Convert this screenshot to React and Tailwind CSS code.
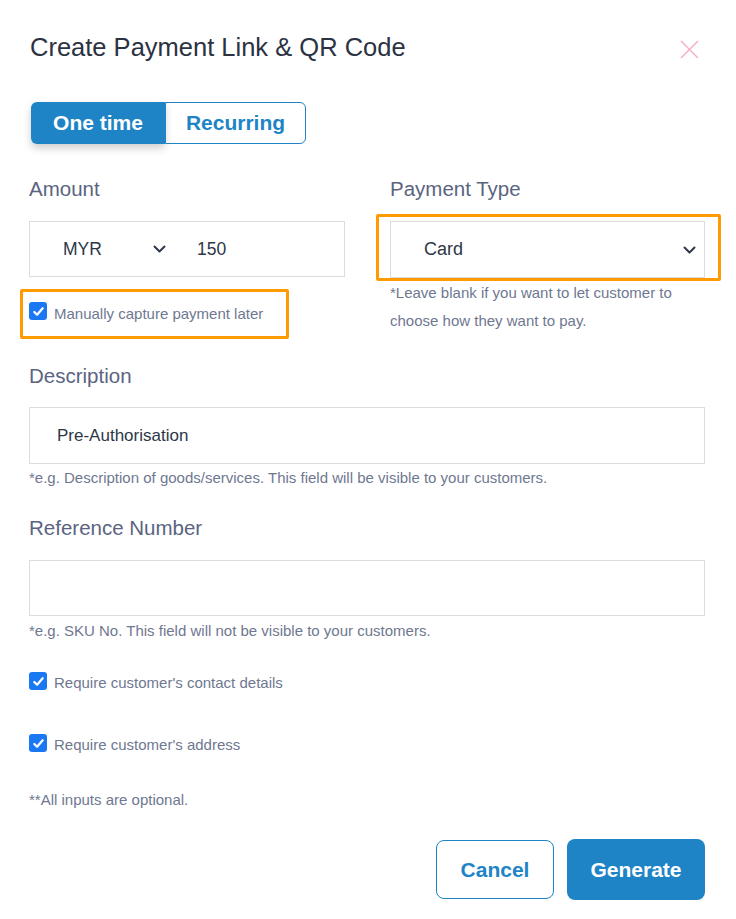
import React from 'react';

const Check = ({ className = '' }) => (
  <span className={`flex h-[18px] w-[18px] shrink-0 items-center justify-center rounded-[3px] bg-[#1a78f2] ${className}`}>
    <svg width="13" height="13" viewBox="0 0 14 14" fill="none">
      <path d="M2.5 7.5l3 3 6-7" stroke="white" strokeWidth="2.4" strokeLinecap="round" strokeLinejoin="round" />
    </svg>
  </span>
);

const Chevron = () => (
  <svg width="13" height="8" viewBox="0 0 13 8" fill="none">
    <path d="M1.5 1.5l5 5 5-5" stroke="#2d3748" strokeWidth="2" strokeLinecap="round" strokeLinejoin="round" />
  </svg>
);

// labels sit 2px lower in their box than the default leading gives
const Label = ({ children }) => (
  <div className="pt-[2px] text-[20.5px] leading-[24px] text-[#5a6481]">{children}</div>
);

const Helper = ({ children, className = '' }) => (
  <div className={`text-[15px] leading-[20px] text-[#6f7891] ${className}`}>{children}</div>
);

export default function App() {
  return (
    <div className="w-[736px] h-[919px] bg-white pl-[29px] pr-[31px] font-['Liberation_Sans',Arial,sans-serif]">
      {/* header */}
      <div className="flex items-start justify-between pt-[33px]">
        <h2 className="pl-[1px] text-[25.5px] leading-[28px] font-normal text-[#2b3242]">
          Create Payment Link &amp; QR Code
        </h2>
        <button className="mt-[7px] mr-[6px]">
          <svg width="19" height="19" viewBox="0 0 19 19" fill="none">
            <path d="M1 1l17 17M18 1L1 18" stroke="#f7b3c6" strokeWidth="1.6" />
          </svg>
        </button>
      </div>

      {/* one time / recurring */}
      <div className="mt-[41px] ml-[2px] flex h-[42px] w-[275px]">
        <button className="flex w-[134px] items-center justify-center rounded-l-[6px] bg-[#1e84c6] text-[21px] font-bold text-white shadow-[0_4px_8px_rgba(0,0,0,0.2)]">
          One time
        </button>
        <button className="flex flex-1 items-center justify-center rounded-r-[6px] border border-[#1e84c6] text-[21px] font-bold text-[#1e84c6]">
          Recurring
        </button>
      </div>

      {/* amount + payment type */}
      <div className="mt-[31px] grid w-[676px] grid-cols-[316px_315px] gap-x-[45px]">
        <div className="flex flex-col">
          <Label>Amount</Label>
          <div className="mt-[20px] flex h-[56px] items-center border border-[#dcdcdc] text-[17.5px] text-[#2d3748]">
            <span className="ml-[33px] w-[90px]">MYR</span>
            <Chevron />
            <span className="ml-[31px]">150</span>
          </div>
          <div className="mt-[12px] -ml-[9px] flex h-[50px] w-[269px] items-start gap-[7px] rounded-[2px] border-[3px] border-[#ff9b00] pl-[6px] pt-[10px]">
            <Check />
            <span className="mt-[3px] text-[15px] leading-[18px] text-[#6f7891]">Manually capture payment later</span>
          </div>
        </div>
        <div className="flex flex-col">
          <Label>Payment Type</Label>
          <div className="mt-[13px] -ml-[14px] -mr-[16px] rounded-[2px] border-[3px] border-[#ff9b00] pl-[11px] pr-[13px] pt-[4px]">
            <div className="flex h-[57px] items-center justify-between border border-[#dcdcdc] pl-[33px] pr-[8px] text-[18px] text-[#2d3748]">
              <span>Card</span>
              <Chevron />
            </div>
          </div>
          <div className="mt-[-2px] text-[15px] leading-[28px] text-[#6f7891]">
            *Leave blank if you want to let customer to
            <br />
            choose how they want to pay.
          </div>
        </div>
      </div>

      {/* description */}
      <div className="mt-[23px]">
        <Label>Description</Label>
        <div className="mt-[19px] flex h-[57px] w-[676px] items-center border border-[#dcdcdc] pl-[27px] text-[17px] text-[#2d3748]">
          Pre-Authorisation
        </div>
        <Helper className="mt-[4px] text-[14px]">
          *e.g. Description of goods/services. This field will be visible to your customers.
        </Helper>
      </div>

      {/* reference number */}
      <div className="mt-[26px]">
        <Label>Reference Number</Label>
        <div className="mt-[20px] h-[56px] w-[676px] border border-[#dcdcdc]" />
        <Helper className="mt-[5px] text-[14px]">
          *e.g. SKU No. This field will not be visible to your customers.
        </Helper>
      </div>

      {/* options */}
      <div className="mt-[31px] flex items-start gap-[7px]">
        <Check />
        <span className="mt-[2px] text-[15px] leading-[18px] text-[#6f7891]">Require customer's contact details</span>
      </div>
      <div className="mt-[42px] flex items-start gap-[7px]">
        <Check />
        <span className="mt-[2px] text-[15px] leading-[18px] text-[#6f7891]">Require customer's address</span>
      </div>
      <Helper className="mt-[36px]">**All inputs are optional.</Helper>

      {/* actions */}
      <div className="mt-[29px] flex w-[676px] items-center justify-end gap-[13px]">
        <button className="h-[59px] w-[118px] rounded-[8px] border border-[#1e84c6] text-[21px] font-bold text-[#1e84c6]">
          Cancel
        </button>
        <button className="h-[61px] w-[138px] rounded-[8px] bg-[#1e84c6] text-[21px] font-bold text-white">
          Generate
        </button>
      </div>
    </div>
  );
}
